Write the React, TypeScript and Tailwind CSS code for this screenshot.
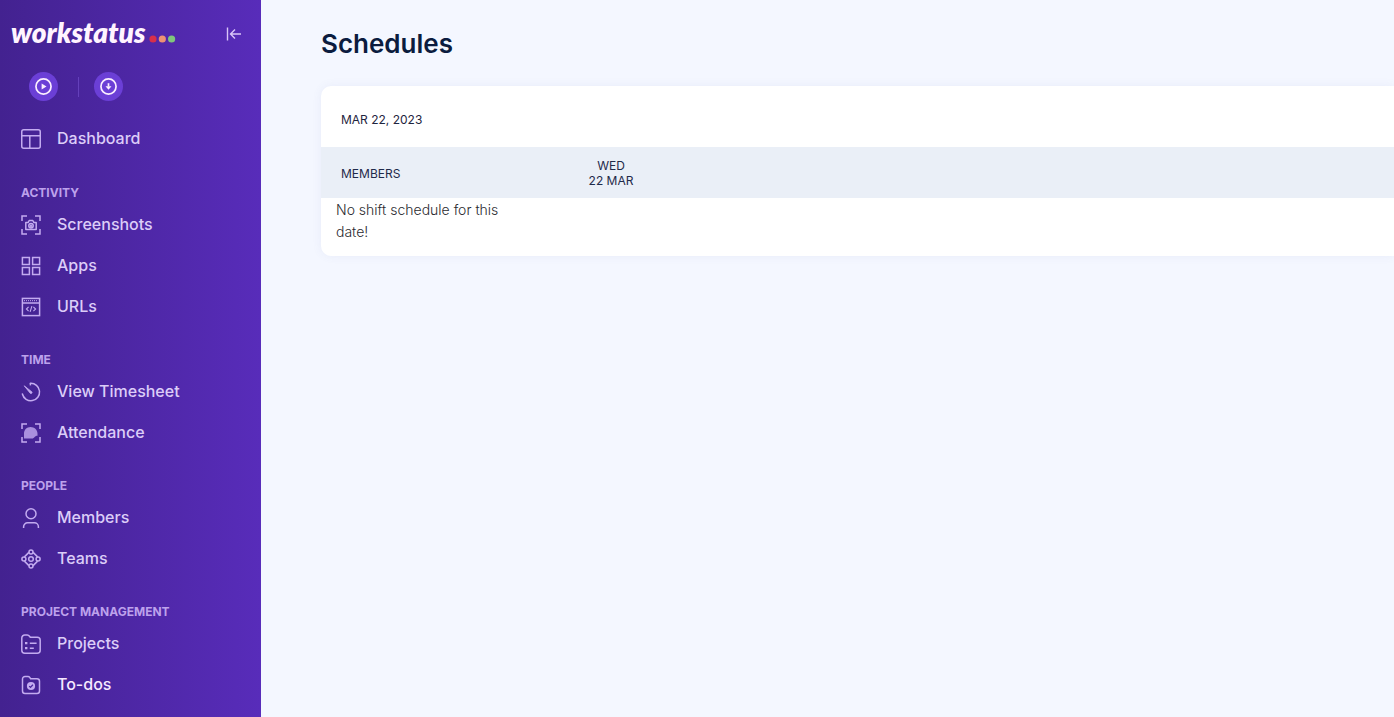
import type { ReactNode } from "react";

function Icon({ children }: { children: ReactNode }) {
  return (
    <svg
      viewBox="0 0 20 20"
      className="mt-[3px] size-5 shrink-0"
      fill="none"
      stroke="currentColor"
      strokeWidth="1.5"
      aria-hidden="true"
    >
      {children}
    </svg>
  );
}

const scanCorners = "M1 6V1h5M14 1h5v5M19 14v5h-5M6 19H1v-5";

const icons = {
  dashboard: (
    <Icon>
      <rect x="0.75" y="0.75" width="18.5" height="18.5" rx="2" />
      <path d="M1 6.8h18M8.8 6.8v12.5" />
    </Icon>
  ),
  screenshots: (
    <Icon>
      <path d={scanCorners} />
      <path d="M4.8 7.4h2.4l1-1.9h3.6l1 1.9h2.4v7.2H4.8z" strokeLinejoin="round" />
      <circle cx="10" cy="10.8" r="2.2" />
      <circle cx="10" cy="10.8" r="0.5" />
    </Icon>
  ),
  apps: (
    <Icon>
      <path d="M1.4 1.4h7v7h-7zM11.6 1.4h7v7h-7zM1.4 11.6h7v7h-7zM11.6 11.6h7v7h-7z" />
    </Icon>
  ),
  urls: (
    <Icon>
      <rect x="1.4" y="1.4" width="17.2" height="17.2" />
      <path d="M1.4 6h17.2" />
      <path d="M3 3.7h14" strokeDasharray="1 1" strokeWidth="1" />
      <path d="M7.6 9.8 5.4 12l2.2 2.2M12.4 9.8l2.2 2.2-2.2 2.2M10.9 9.2l-1.8 5.6" strokeWidth="1.1" />
    </Icon>
  ),
  timesheet: (
    <Icon>
      <path d="M9.4 1.3A8.7 8.7 0 1 1 1.4 12" strokeLinecap="round" />
      <path d="M9.4 1v2.4" />
      <path d="M3.2 3.8 10.9 9.9a1.1 1.1 0 0 1-1.5 1.5z" fill="currentColor" strokeWidth="0.8" />
    </Icon>
  ),
  attendance: (
    <Icon>
      <path d={scanCorners} />
      <path
        d="M3 15.500V10.500C3 6.800 5.900 4 9.600 4s6.900 2.800 6.900 6.400v2.400c-1.500 0-2.400.6-3.300 1.600-.9.900-1.800 1.100-3.200 1.100z"
        fill="currentColor"
        fillOpacity="0.8"
        stroke="none"
      />
    </Icon>
  ),
  members: (
    <Icon>
      <circle cx="10" cy="5.8" r="5" />
      <path d="M2.6 20v-1.2a4 4 0 0 1 4-4h6.8a4 4 0 0 1 4 4V20" />
    </Icon>
  ),
  teams: (
    <Icon>
      <path d="M3.400 7.900 7.900 3.400M12.100 3.400l4.500 4.500M16.600 12.100l-4.500 4.500M7.900 16.600l-4.500-4.500" />
      <circle cx="10" cy="2.900" r="2" />
      <circle cx="17.100" cy="10" r="2" />
      <circle cx="10" cy="17.100" r="2" />
      <circle cx="2.900" cy="10" r="2" />
      <circle cx="10" cy="10" r="2.300" />
    </Icon>
  ),
  projects: (
    <Icon>
      <path d="M.8 4a3 3 0 0 1 3-3h2.400c1 0 1.700.4 2.300 1.200l.8 1.100h6.900a3 3 0 0 1 3 3v9.900a3 3 0 0 1-3 3H3.800a3 3 0 0 1-3-3z" />
      <path d="M4 9.200h2.400M4 14.200h2.400" strokeWidth="2.200" />
      <path d="M8.800 9.200h6.800M8.800 14.200h4" />
    </Icon>
  ),
  todos: (
    <Icon>
      <path d="M1.500 4A2.500 2.500 0 0 1 4 1.500h3c.8 0 1.300.3 1.700.9l.9 1.300H16a2.500 2.500 0 0 1 2.500 2.500V16a2.500 2.500 0 0 1-2.500 2.500H4A2.500 2.500 0 0 1 1.500 16z" />
      <circle cx="10" cy="11" r="4.100" fill="currentColor" stroke="none" />
      <path d="m8.200 11.100 1.300 1.300 2.400-2.600" stroke="#47259a" strokeWidth="1.300" />
    </Icon>
  ),
};

type Item = { label: string; icon: ReactNode; active?: boolean };

const sections: { title: string; items: Item[] }[] = [
  {
    title: "ACTIVITY",
    items: [
      { label: "Screenshots", icon: icons.screenshots },
      { label: "Apps", icon: icons.apps },
      { label: "URLs", icon: icons.urls },
    ],
  },
  {
    title: "TIME",
    items: [
      { label: "View Timesheet", icon: icons.timesheet },
      { label: "Attendance", icon: icons.attendance },
    ],
  },
  {
    title: "PEOPLE",
    items: [
      { label: "Members", icon: icons.members },
      { label: "Teams", icon: icons.teams },
    ],
  },
  {
    title: "PROJECT MANAGEMENT",
    items: [
      { label: "Projects", icon: icons.projects },
      { label: "To-dos", icon: icons.todos, active: true },
    ],
  },
];

function NavLink({ label, icon, active }: Item) {
  return (
    <a href="#" className="flex h-[41px] items-center gap-4 text-[#c3abf0]">
      {icon}
      <span className={active ? "font-medium text-[#f6e9ff]" : "font-medium text-[#dccdf8]"}>{label}</span>
    </a>
  );
}

function Sidebar() {
  return (
    <aside className="w-[261px] shrink-0 bg-linear-to-r from-[#432290] to-[#582cba]">
      <div className="flex h-[68px] items-start justify-between pt-4 pr-[18px] pl-[11px]">
        <a href="#" className="flex items-baseline gap-1 text-[#fff4ff]" aria-label="workstatus">
          <span className="font-[Lato,sans-serif] text-[28px] leading-8 font-extrabold italic">workstatus</span>
          <svg viewBox="0 0 27 8" className="h-2 w-[27px]" aria-hidden="true">
            <circle cx="4" cy="4" r="3.600" fill="#d8304a" />
            <circle cx="13.300" cy="4" r="3.600" fill="#ee9274" />
            <circle cx="22.600" cy="4" r="3.600" fill="#80c67c" />
          </svg>
        </a>
        <button type="button" aria-label="Collapse sidebar" className="pt-2.5 text-[#d9c5f8]">
          <svg viewBox="0 0 18 16" className="h-4 w-[18px]" fill="none" stroke="currentColor" strokeWidth="1.400" aria-hidden="true">
            <path d="M2.500 1.500v13M16 8H5.500M10 3.500 5.500 8l4.500 4.500" />
          </svg>
        </button>
      </div>
      <div className="flex items-center pt-1 pl-[29px] text-[#fbeeff]">
        <button type="button" aria-label="Start timer" className="flex size-[29px] items-center justify-center rounded-full bg-[#6b3fd6]">
          <svg viewBox="0 0 18 18" className="size-[17px]" fill="none" stroke="currentColor" strokeWidth="1.800" aria-hidden="true">
            <circle cx="9" cy="9" r="8" />
            <path d="M7 5.700v6.600L12.200 9z" fill="currentColor" stroke="none" />
          </svg>
        </button>
        <span className="mr-[15px] ml-5 h-5 w-px bg-[#6440bb]" />
        <button type="button" aria-label="Download" className="flex size-[29px] items-center justify-center rounded-full bg-[#6b3fd6]">
          <svg viewBox="0 0 18 18" className="size-[17px]" fill="none" stroke="currentColor" strokeWidth="1.800" aria-hidden="true">
            <circle cx="9" cy="9" r="8" />
            <path d="M9 5.500v3.500" />
            <path d="M5.800 8.800h6.400L9 12.400z" fill="currentColor" stroke="none" />
          </svg>
        </button>
      </div>
      <nav className="px-[21px] pt-4">
        <div className="pb-px">
          <NavLink label="Dashboard" icon={icons.dashboard} />
        </div>
        {sections.map((section) => (
          <section key={section.title} className="pt-6">
            <h2 className="text-xs leading-5 font-bold text-[#bda2ec]">{section.title}</h2>
            {section.items.map((item) => (
              <NavLink key={item.label} {...item} />
            ))}
          </section>
        ))}
      </nav>
    </aside>
  );
}

export default function App() {
  return (
    <div className="flex min-h-screen bg-[#f4f7ff] font-[Inter,sans-serif]">
      <Sidebar />
      <main className="min-w-0 flex-1 pt-6 pl-[60px]">
        <h1 className="text-[26px] leading-10 font-semibold text-[#0b1c3e]">Schedules</h1>
        <div className="mt-[22px] overflow-hidden rounded-l-[10px] bg-white pb-3 shadow-[0_0_10px_rgba(90,100,180,0.08)]">
          <div className="px-5 pt-[26px] pb-5 text-xs leading-[15px] text-[#1f2540]">MAR 22, 2023</div>
          <table className="w-full table-fixed">
            <colgroup>
              <col className="w-[200px]" />
              <col className="w-[180px]" />
              <col />
            </colgroup>
            <thead className="bg-[#eaeff7] text-xs leading-[15px] text-[#1f2a4a]">
              <tr>
                <th scope="col" className="px-5 pt-0.5 text-left font-normal">MEMBERS</th>
                <th scope="col" className="pt-[11px] pb-[10px] text-center font-normal">
                  WED
                  <br />
                  22 MAR
                </th>
                <td />
              </tr>
            </thead>
            <tbody>
              <tr>
                <td className="px-[15px] py-px text-sm leading-[22px] font-light text-[#2b2b2f]">
                  No shift schedule for this date!
                </td>
                <td />
                <td />
              </tr>
            </tbody>
          </table>
        </div>
      </main>
    </div>
  );
}
